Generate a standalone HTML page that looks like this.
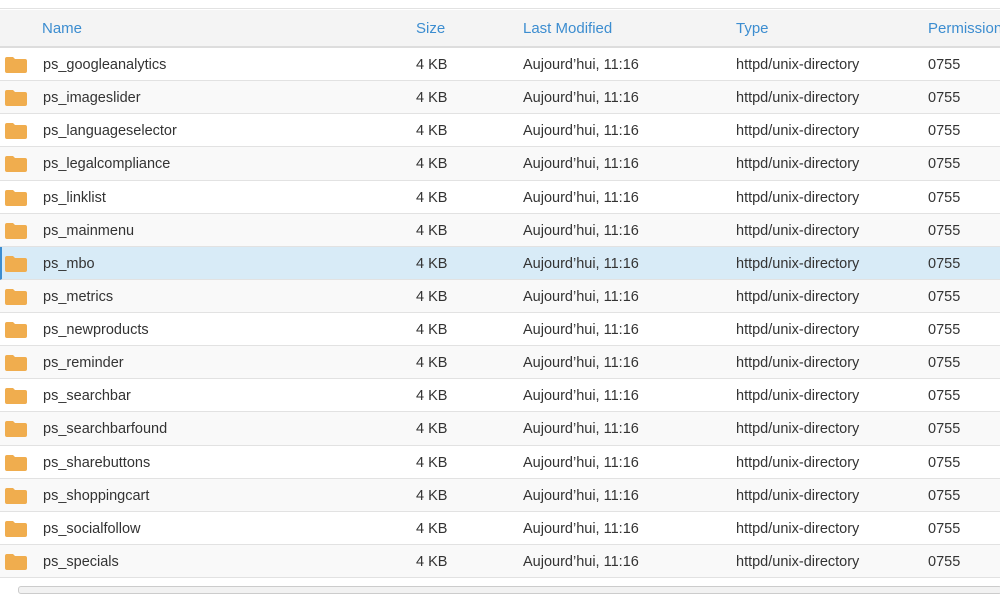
<!DOCTYPE html>
<html><head><style>
body{margin:0;width:1000px;height:590px;overflow:hidden;background:#fff;font-family:"Liberation Sans",Arial,sans-serif;font-size:14.5px;color:#333}
.top{position:absolute;left:0;top:8px;width:1000px;height:1px;background:#e2e2e2}
.hdr{position:absolute;left:0;top:10px;width:1000px;height:36px;background:#f4f4f4;border-bottom:2px solid #ddd;color:#3c8dd0;font-size:15px}
.row{position:absolute;left:0;width:1000px;height:32.13px;border-bottom:1px solid #e2e2e2}
.c{position:absolute;top:1px;line-height:33px;white-space:nowrap}
.hdr .c{line-height:36px}
.alt{background:#f9f9f9}
.sel{background:#d8ebf7;border-left:2px solid #3c8dd0;width:998px}
.ic{position:absolute;left:5px;top:9px}
.bot{position:absolute;left:18px;top:586px;width:982px;height:6px;border:1px solid #ccc;border-radius:3px;background:#f2f2f2}
</style></head><body>
<div class="top"></div>
<div class="hdr"><span class="c" style="left:42px">Name</span><span class="c" style="left:416px">Size</span><span class="c" style="left:523px">Last Modified</span><span class="c" style="left:736px">Type</span><span class="c" style="left:928px">Permissions</span></div>
<div id="rows"></div>
<div class="bot"></div>
<script>
var n=["ps_googleanalytics","ps_imageslider","ps_languageselector","ps_legalcompliance","ps_linklist","ps_mainmenu","ps_mbo","ps_metrics","ps_newproducts","ps_reminder","ps_searchbar","ps_searchbarfound","ps_sharebuttons","ps_shoppingcart","ps_socialfollow","ps_specials"];
var h="";
n.forEach(function(x,i){
var cls=i==6?"sel":(i%2==1?"alt":"");
var off=i==6?-2:0;
h+='<div class="row '+cls+'" style="top:'+(48+33.13*i)+'px"><svg class="ic" style="left:'+(5+off)+'px" width="22" height="16" viewBox="0 0 22 16"><path d="M0 2Q0 0 2 0H8L10 2H20Q22 2 22 4V14Q22 16 20 16H2Q0 16 0 14Z" fill="#f0ad4e"/></svg>'+
'<span class="c" style="left:'+(43+off)+'px">'+x+'</span><span class="c" style="left:'+(416+off)+'px">4 KB</span><span class="c" style="left:'+(523+off)+'px">Aujourd’hui, 11:16</span><span class="c" style="left:'+(736+off)+'px">httpd/unix-directory</span><span class="c" style="left:'+(928+off)+'px">0755</span></div>';
});
document.getElementById("rows").innerHTML=h;
</script>
</body></html>
